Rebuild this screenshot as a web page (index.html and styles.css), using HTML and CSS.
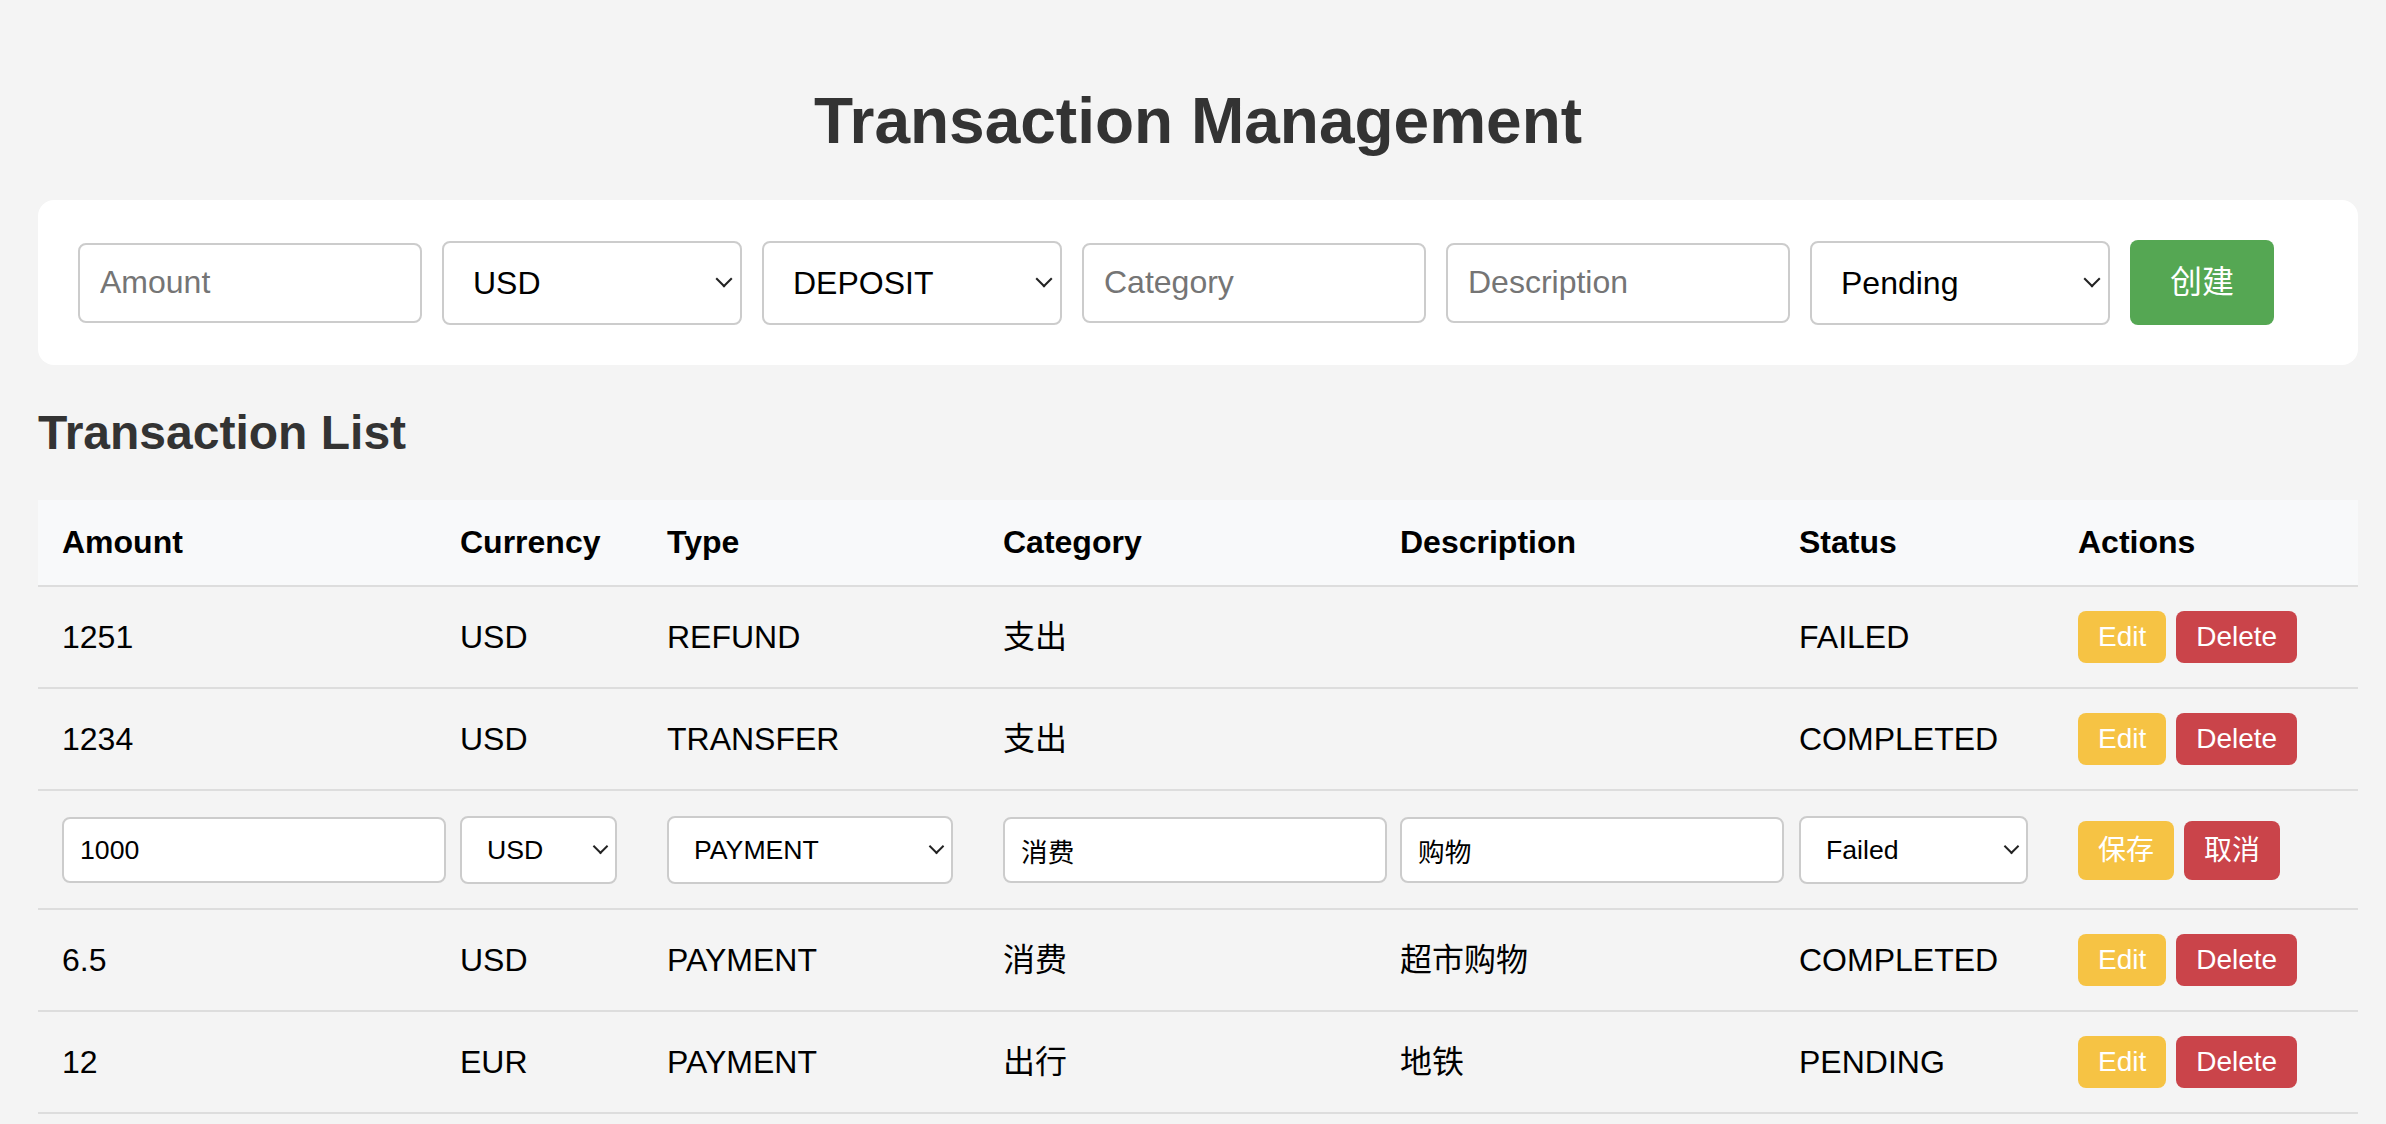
FILE: index.html
```html
<!DOCTYPE html>
<html lang="en">
<head>
<meta charset="utf-8">
<title>Transaction Management</title>
<link rel="stylesheet" href="styles.css">
</head>
<body>
<div class="page">
  <h1 class="title">Transaction Management</h1>

  <div class="panel">
    <input class="field field-input" type="text" placeholder="Amount">
    <span class="select-wrap select-wrap-lg">
      <select class="field field-select">
        <option>USD</option><option>EUR</option><option>CNY</option>
      </select>
    </span>
    <span class="select-wrap select-wrap-lg">
      <select class="field field-select">
        <option>DEPOSIT</option><option>WITHDRAWAL</option><option>TRANSFER</option><option>PAYMENT</option><option>REFUND</option>
      </select>
    </span>
    <input class="field field-input" type="text" placeholder="Category">
    <input class="field field-input" type="text" placeholder="Description">
    <span class="select-wrap select-wrap-lg">
      <select class="field field-select">
        <option>Pending</option><option>Completed</option><option>Failed</option>
      </select>
    </span>
    <button class="btn-create" type="button">创建</button>
  </div>

  <h2 class="subtitle">Transaction List</h2>

  <table class="tx-table">
    <colgroup>
      <col class="col-amount">
      <col class="col-currency">
      <col class="col-type">
      <col class="col-category">
      <col class="col-description">
      <col class="col-status">
      <col class="col-actions">
    </colgroup>
    <thead>
      <tr>
        <th>Amount</th>
        <th>Currency</th>
        <th>Type</th>
        <th>Category</th>
        <th>Description</th>
        <th>Status</th>
        <th>Actions</th>
      </tr>
    </thead>
    <tbody>
      <tr>
        <td>1251</td>
        <td>USD</td>
        <td>REFUND</td>
        <td>支出</td>
        <td></td>
        <td>FAILED</td>
        <td><button class="btn btn-edit" type="button">Edit</button><button class="btn btn-delete" type="button">Delete</button></td>
      </tr>
      <tr>
        <td>1234</td>
        <td>USD</td>
        <td>TRANSFER</td>
        <td>支出</td>
        <td></td>
        <td>COMPLETED</td>
        <td><button class="btn btn-edit" type="button">Edit</button><button class="btn btn-delete" type="button">Delete</button></td>
      </tr>
      <tr class="edit-row">
        <td><input class="cell-field cell-input" type="text" value="1000"></td>
        <td><span class="select-wrap select-wrap-sm"><select class="cell-field cell-select sel-currency"><option>USD</option><option>EUR</option><option>CNY</option></select></span></td>
        <td><span class="select-wrap select-wrap-sm"><select class="cell-field cell-select sel-type"><option>DEPOSIT</option><option>WITHDRAWAL</option><option>TRANSFER</option><option selected>PAYMENT</option><option>REFUND</option></select></span></td>
        <td><input class="cell-field cell-input" type="text" value="消费"></td>
        <td><input class="cell-field cell-input" type="text" value="购物"></td>
        <td><span class="select-wrap select-wrap-sm"><select class="cell-field cell-select sel-status"><option>Pending</option><option>Completed</option><option selected>Failed</option></select></span></td>
        <td><button class="btn btn-edit btn-cjk" type="button">保存</button><button class="btn btn-delete btn-cjk" type="button">取消</button></td>
      </tr>
      <tr>
        <td>6.5</td>
        <td>USD</td>
        <td>PAYMENT</td>
        <td>消费</td>
        <td>超市购物</td>
        <td>COMPLETED</td>
        <td><button class="btn btn-edit" type="button">Edit</button><button class="btn btn-delete" type="button">Delete</button></td>
      </tr>
      <tr>
        <td>12</td>
        <td>EUR</td>
        <td>PAYMENT</td>
        <td>出行</td>
        <td>地铁</td>
        <td>PENDING</td>
        <td><button class="btn btn-edit" type="button">Edit</button><button class="btn btn-delete" type="button">Delete</button></td>
      </tr>
    </tbody>
  </table>
</div>
</body>
</html>
```

FILE: styles.css
```css
body {
  margin: 0;
  background: #f4f4f4;
  font-family: "Liberation Sans", "Noto Sans CJK SC", sans-serif;
  font-size: 32px;
  color: #000;
}

.page {
  width: 2320px;
  margin-left: 38px;
  padding-top: 84px;
}

.title {
  margin: 0 0 42px;
  font-size: 64px;
  font-weight: bold;
  color: #333;
  text-align: center;
}

/* ---------- create form ---------- */
.panel {
  display: flex;
  align-items: center;
  gap: 20px;
  padding: 40px;
  background: #fff;
  border-radius: 16px;
}

.field {
  box-sizing: border-box;
  margin: 0;
  font-family: inherit;
  font-size: 32px;
  color: #000;
  background: #fff;
  border: 2px solid #ccc;
  border-radius: 8px;
  outline: none;
}

.field::placeholder,
.cell-field::placeholder {
  color: #757575;
}

.field-input {
  width: 344px;
  height: 80px;
  padding: 0 20px;
}

.select-wrap {
  position: relative;
  display: inline-block;
}

.select-wrap::after {
  content: "";
  position: absolute;
  top: 50%;
  border-right: 2px solid #222;
  border-bottom: 2px solid #222;
  transform: rotate(45deg);
  pointer-events: none;
}

.select-wrap-lg::after {
  right: 12px;
  width: 10px;
  height: 10px;
  margin-top: -10px;
}

.select-wrap-sm::after {
  right: 11px;
  width: 9px;
  height: 9px;
  margin-top: -9px;
}

.field-select {
  display: block;
  -webkit-appearance: none;
  appearance: none;
  width: 300px;
  height: 84px;
  padding: 0 44px 0 29px;
}

.btn-create {
  margin: 0;
  padding: 20px 40px;
  font-family: inherit;
  font-size: 32px;
  line-height: 45px;
  color: #fff;
  background: #55a753;
  border: none;
  border-radius: 8px;
}

.subtitle {
  margin: 40px 0;
  font-size: 48px;
  font-weight: bold;
  color: #333;
}

/* ---------- table ---------- */
.tx-table {
  width: 2320px;
  border-collapse: collapse;
  table-layout: fixed;
}

.col-amount { width: 398px; }
.col-currency { width: 207px; }
.col-type { width: 336px; }
.col-category { width: 397px; }
.col-description { width: 399px; }
.col-status { width: 279px; }
.col-actions { width: 304px; }

.tx-table th,
.tx-table td {
  padding: 24px;
  text-align: left;
  border-bottom: 2px solid #ddd;
  white-space: nowrap;
}

.tx-table th {
  background: #f8f9fa;
  font-weight: bold;
}

.tx-table td {
  line-height: 37px;
}

.tx-table .edit-row td {
  padding: 25px 24px 24px;
}

.cell-field {
  box-sizing: border-box;
  margin: 0;
  font-family: inherit;
  font-size: 26.67px;
  color: #000;
  background: #fff;
  border: 2px solid #ccc;
  border-radius: 8px;
  outline: none;
  vertical-align: middle;
}

.cell-input {
  width: 384px;
  height: 66px;
  padding: 0 16px;
}

.edit-row .select-wrap {
  vertical-align: middle;
}

.cell-select {
  display: block;
  -webkit-appearance: none;
  appearance: none;
  height: 68px;
  padding: 0 40px 0 25px;
}

.sel-currency { width: 157px; }
.sel-type { width: 286px; }
.sel-status { width: 229px; }

.btn {
  margin: 0;
  padding: 10px 20px;
  font-family: inherit;
  font-size: 28px;
  color: #fff;
  border: none;
  border-radius: 8px;
}

.btn + .btn {
  margin-left: 10px;
}

.btn-edit {
  background: #f6c344;
}

.btn-delete {
  background: #ca444a;
}

.btn-cjk {
  line-height: 39px;
  vertical-align: middle;
}
```
